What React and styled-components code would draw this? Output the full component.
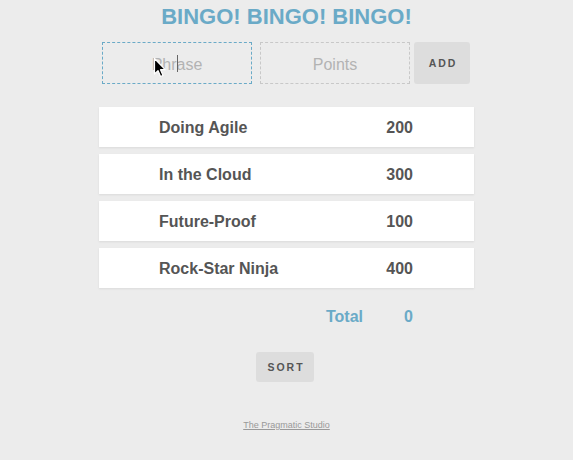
import React from "react";
import styled, { createGlobalStyle } from "styled-components";

const Global = createGlobalStyle`
  html, body { margin: 0; padding: 0; background: #ececec; }
  body { font-family: "Liberation Sans", Arial, Helvetica, sans-serif; color: #555; }
`;

const Page = styled.div`
  width: 375px;
  margin: 0 auto;
  display: flex;
  flex-direction: column;
  align-items: center;
  position: relative;
`;

const Title = styled.h1`
  margin: 0;
  padding-top: 6px;
  font-size: 22px;
  line-height: 22px;
  font-weight: bold;
  color: #6aaac7;
  letter-spacing: 0;
`;

const Form = styled.form`
  display: flex;
  margin-top: 14px;
  align-self: flex-start;
  margin-left: 3px;
  width: 368px;
`;

const FieldWrap = styled.div`
  position: relative;
  width: 150px;
  height: 42px;
  margin-right: ${(p) => p.$gap}px;
`;

const Field = styled.input`
  box-sizing: border-box;
  width: 100%;
  height: 100%;
  border: 1px dashed ${(p) => (p.$focused ? "#6aaac7" : "#c8c8c8")};
  background: transparent;
  font-family: "Liberation Sans", Arial, sans-serif;
  font-size: 16px;
  text-align: center;
  color: #555;
  outline: none;
  padding: 3px 0 0;
  &::placeholder { color: #b3b3b3; }
`;

const Caret = styled.span`
  position: absolute;
  left: 75px;
  top: 13px;
  width: 1px;
  height: 17px;
  background: #666;
`;

const Button = styled.button`
  box-sizing: border-box;
  width: ${(p) => p.$w}px;
  height: ${(p) => p.$h}px;
  border: none;
  border-radius: 3px;
  background: #dddddd;
  color: #555;
  font-family: "Liberation Sans", Arial, sans-serif;
  font-weight: bold;
  font-size: 10.5px;
  letter-spacing: 2px;
  padding: 0 0 0 2px;
  cursor: pointer;
`;

const List = styled.div`
  margin-top: 23px;
  width: 375px;
  display: flex;
  flex-direction: column;
  gap: 7px;
`;

const Row = styled.div`
  box-sizing: border-box;
  display: grid;
  grid-template-columns: 1fr 50px;
  align-items: center;
  height: 40px;
  padding: 2px 61px 0 60px;
  margin-top: ${(p) => (p.$total ? "1px" : "0")};
  background: ${(p) => (p.$total ? "transparent" : "#fff")};
  box-shadow: ${(p) => (p.$total ? "none" : "0 1px 2px rgba(0,0,0,0.08)")};
  color: ${(p) => (p.$total ? "#6aaac7" : "#555")};
  font-size: 16px;
  font-weight: bold;
`;

const Name = styled.span`
  justify-self: ${(p) => (p.$end ? "end" : "start")};
`;

const Points = styled.span`
  justify-self: end;
`;

const SortWrap = styled.div`
  margin-top: 16px;
  margin-right: 3px;
`;

const Footer = styled.a`
  margin-top: 38px;
  font-size: 9px;
  line-height: 11px;
  color: #999;
  text-decoration: underline;
`;

const Cursor = styled.svg`
  position: absolute;
  left: ${(p) => p.$x}px;
  top: ${(p) => p.$y}px;
  pointer-events: none;
`;

const items = [
  { phrase: "Doing Agile", points: 200 },
  { phrase: "In the Cloud", points: 300 },
  { phrase: "Future-Proof", points: 100 },
  { phrase: "Rock-Star Ninja", points: 400 },
];

export default function App() {
  return (
    <>
      <Global />
      <Page>
        <Title>BINGO! BINGO! BINGO!</Title>
        <Form onSubmit={(e) => e.preventDefault()}>
          <FieldWrap $gap={8}>
            <Field $focused placeholder="Phrase" />
            <Caret />
          </FieldWrap>
          <FieldWrap $gap={4}>
            <Field placeholder="Points" />
          </FieldWrap>
          <Button type="submit" $w={56} $h={42}>ADD</Button>
        </Form>
        <List>
          {items.map((it) => (
            <Row key={it.phrase}>
              <Name>{it.phrase}</Name>
              <Points>{it.points}</Points>
            </Row>
          ))}
          <Row $total>
            <Name $end>Total</Name>
            <Points>0</Points>
          </Row>
        </List>
        <SortWrap>
          <Button $w={58} $h={30}>SORT</Button>
        </SortWrap>
        <Footer href="#">The Pragmatic Studio</Footer>
        <Cursor $x={54} $y={57} width="14" height="22" viewBox="0 0 14 22">
          <path
            d="M1.5 1.5 L1.5 17 L5 13.6 L7.6 19.5 L10 18.4 L7.5 12.7 L12.2 12.7 Z"
            fill="#000"
            stroke="#fff"
            strokeWidth="1.2"
            strokeLinejoin="round"
          />
        </Cursor>
      </Page>
    </>
  );
}
